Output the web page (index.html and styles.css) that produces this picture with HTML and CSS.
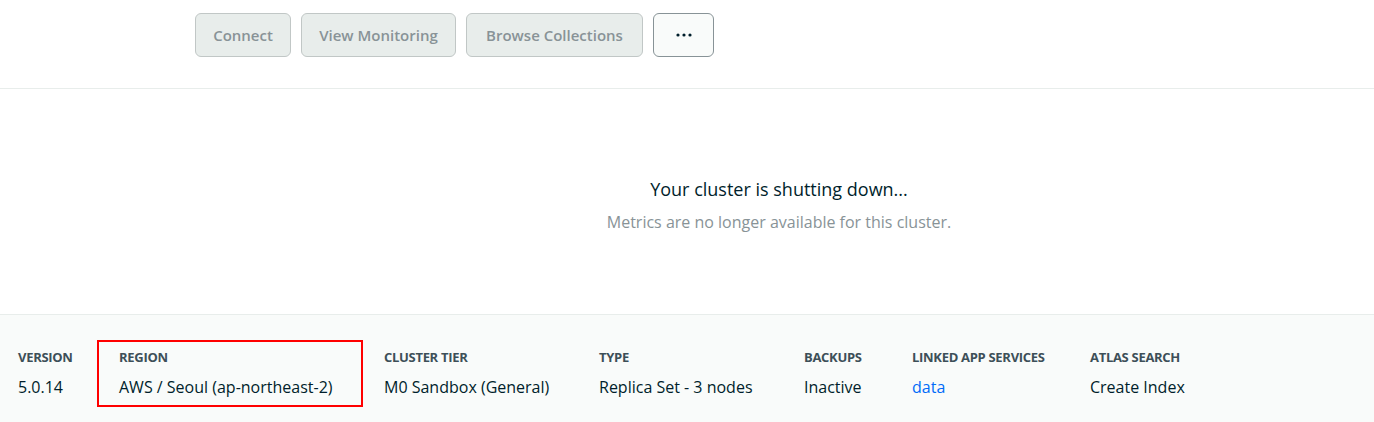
FILE: index.html
```html
<!DOCTYPE html>
<html>
<head>
<meta charset="utf-8">
<link rel="stylesheet" href="styles.css">
</head>
<body>
<div class="page">
  <div class="toolbar">
    <button class="btn disabled w-connect">Connect</button>
    <button class="btn disabled w-monitor">View Monitoring</button>
    <button class="btn disabled w-browse">Browse Collections</button>
    <button class="btn more" aria-label="More">
      <svg width="16" height="4" viewBox="0 0 16 4"><circle cx="2" cy="2" r="1.6" fill="#001E2B"/><circle cx="8" cy="2" r="1.6" fill="#001E2B"/><circle cx="14" cy="2" r="1.6" fill="#001E2B"/></svg>
    </button>
  </div>
  <div class="chart">
    <div class="msg-title">Your cluster is shutting down...</div>
    <div class="msg-sub">Metrics are no longer available for this cluster.</div>
  </div>
  <div class="footer">
    <div class="item"><div class="label">VERSION</div><div class="value">5.0.14</div></div>
    <div class="item highlight"><div class="label">REGION</div><div class="value">AWS / Seoul (ap-northeast-2)</div></div>
    <div class="item"><div class="label">CLUSTER TIER</div><div class="value">M0 Sandbox (General)</div></div>
    <div class="item"><div class="label">TYPE</div><div class="value">Replica Set - 3 nodes</div></div>
    <div class="item"><div class="label">BACKUPS</div><div class="value">Inactive</div></div>
    <div class="item"><div class="label">LINKED APP SERVICES</div><div class="value link">data</div></div>
    <div class="item"><div class="label">ATLAS SEARCH</div><div class="value">Create Index</div></div>
  </div>
</div>
</body>
</html>
```

FILE: styles.css
```css
* { box-sizing: border-box; }
html, body { margin: 0; padding: 0; background: #ffffff; }
body { font-family: "Open Sans", "Lato", sans-serif; color: #001E2B; }
.page { width: 1374px; height: 422px; overflow: hidden; display: flex; flex-direction: column; }
.toolbar {
  display: flex; gap: 10px; padding: 13px 0 0 195px; height: 89px;
  border-bottom: 1px solid #E8EDEB;
}
.btn {
  height: 44px; border-radius: 6px; border: 1px solid #C1C7C6;
  background: #E8EDEB; color: #889397; font-family: inherit;
  font-size: 15px; font-weight: 600; padding: 0; cursor: default;
  display: flex; align-items: center; justify-content: center;
}
.w-connect { width: 96px; }
.w-monitor { width: 155px; }
.w-browse { width: 177px; }
.btn.more { width: 61px; background: #F9FBFA; border-color: #889397; }
.chart {
  height: 225px; display: flex; flex-direction: column; align-items: center;
  padding: 89px 0 0 184px;
}
.msg-title { font-size: 18px; line-height: 22px; color: #001E2B; }
.msg-sub { font-size: 16px; line-height: 20px; color: #889397; margin-top: 12px; }
.footer {
  flex: 1; background: #F9FBFA; border-top: 1px solid #E8EDEB;
  display: grid; grid-template-columns: 56px 220px 170px 160px 63px 133px auto;
  column-gap: 45px; align-items: start; padding: 34px 0 0 18px;
}
.item { position: relative; white-space: nowrap; }
.label { font-size: 13px; font-weight: 700; color: #3D4F58; line-height: 16px; letter-spacing: -0.3px; }
.value { font-size: 16px; line-height: 20px; margin-top: 12px; color: #001E2B; }
.value.link { color: #016BF8; }
.highlight::after {
  content: ""; position: absolute; left: -22px; right: -24px; top: -9px; bottom: -10px;
  border: 2px solid #FF0000; pointer-events: none;
}
```
